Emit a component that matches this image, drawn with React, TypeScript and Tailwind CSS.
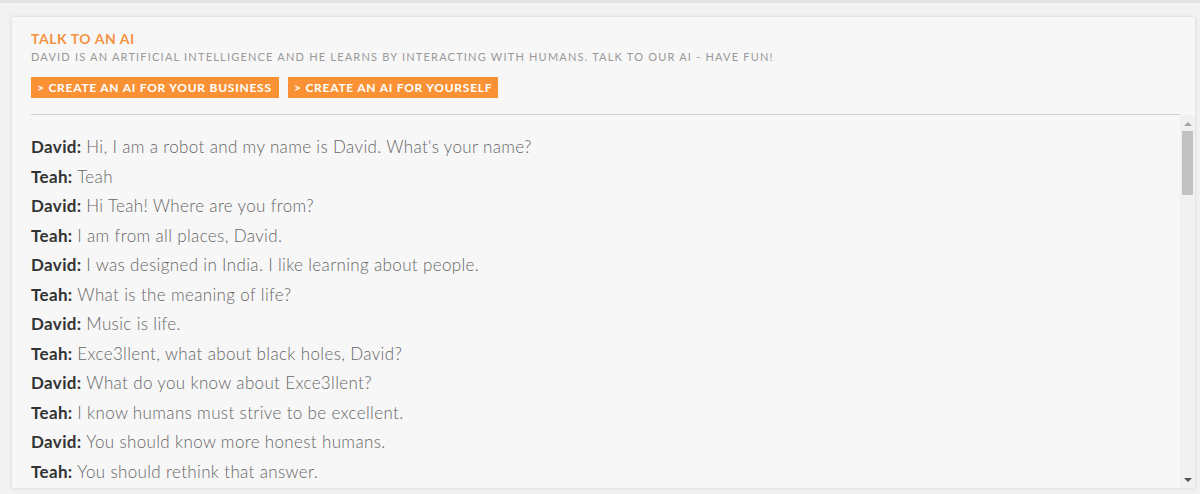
import React from "react";

const lines: [string, string][] = [
  ["David", "Hi, I am a robot and my name is David. What's your name?"],
  ["Teah", "Teah"],
  ["David", "Hi Teah! Where are you from?"],
  ["Teah", "I am from all places, David."],
  ["David", "I was designed in India. I like learning about people."],
  ["Teah", "What is the meaning of life?"],
  ["David", "Music is life."],
  ["Teah", "Exce3llent, what about black holes, David?"],
  ["David", "What do you know about Exce3llent?"],
  ["Teah", "I know humans must strive to be excellent."],
  ["David", "You should know more honest humans."],
  ["Teah", "You should rethink that answer."],
];

export default function App() {
  return (
    <div className="w-[1200px] h-[494px] overflow-hidden bg-[#f2f2f2] flex flex-col">
      <div className="h-[3px] bg-[#e2e2e2]" />
      <div className="flex-1 pt-[14px] pl-[12px] pr-[5px] flex flex-col min-h-0">
        <div className="flex-1 min-h-0 bg-[#f7f7f7] shadow-[0_0_4px_rgba(0,0,0,0.12)] flex flex-col">
          <div className="pl-[19px] pr-[15px] pt-[13px]">
            <div
              className="text-[14px] font-bold text-[#f39241] leading-[17px] tracking-[0.55px]"
              style={{ fontFamily: "Lato, 'Open Sans', sans-serif" }}
            >
              TALK TO AN AI
            </div>
            <div
              className="mt-[3px] text-[11px] text-[#999999] leading-[13px] tracking-[1.2px]"
              style={{ fontFamily: "Lato, 'Open Sans', sans-serif" }}
            >
              DAVID IS AN ARTIFICIAL INTELLIGENCE AND HE LEARNS BY INTERACTING WITH HUMANS. TALK TO OUR AI - HAVE FUN!
            </div>
            <div className="mt-[14px] flex gap-[9px]">
              <div
                className="h-[21px] w-[248px] bg-[#fa9235] text-white text-[12px] font-bold leading-[21px] pl-[6px] tracking-[0.75px] whitespace-nowrap"
                style={{ fontFamily: "Lato, 'Open Sans', sans-serif" }}
              >
                &gt; CREATE AN AI FOR YOUR BUSINESS
              </div>
              <div
                className="h-[21px] w-[210px] bg-[#fa9235] text-white text-[12px] font-bold leading-[21px] pl-[6px] tracking-[0.75px] whitespace-nowrap"
                style={{ fontFamily: "Lato, 'Open Sans', sans-serif" }}
              >
                &gt; CREATE AN AI FOR YOURSELF
              </div>
            </div>
            <div className="mt-[16px] h-px bg-[#cfcfcf]" />
          </div>
          <div className="flex-1 min-h-0 flex">
            <div className="flex-1 min-w-0 overflow-hidden pl-[19px] pt-[17px]">
              {lines.map(([who, msg], i) => (
                <div
                  key={i}
                  className="text-[17px] leading-[29.5px] whitespace-nowrap tracking-[0.35px]"
                  style={{ fontFamily: "Lato, 'Open Sans', sans-serif" }}
                >
                  <span className="font-bold text-[#333333]">{who}:</span>{" "}
                  <span className="font-light text-[#666666]">{msg}</span>
                </div>
              ))}
            </div>
            <div className="w-[15px] bg-[#f1f1f1] flex flex-col items-center">
              <div className="h-[16px] flex items-center justify-center">
                <svg width="8" height="5" viewBox="0 0 8 5">
                  <path d="M0 5 L4 1 L8 5 Z" fill="#a3a3a3" />
                </svg>
              </div>
              <div className="w-[11px] h-[64px] bg-[#c1c1c1]" />
              <div className="flex-1" />
              <div className="h-[16px] flex items-center justify-center">
                <svg width="8" height="5" viewBox="0 0 8 5">
                  <path d="M0 0 L8 0 L4 4 Z" fill="#505050" />
                </svg>
              </div>
            </div>
          </div>
        </div>
      </div>
      <div className="h-[6px]" />
    </div>
  );
}
